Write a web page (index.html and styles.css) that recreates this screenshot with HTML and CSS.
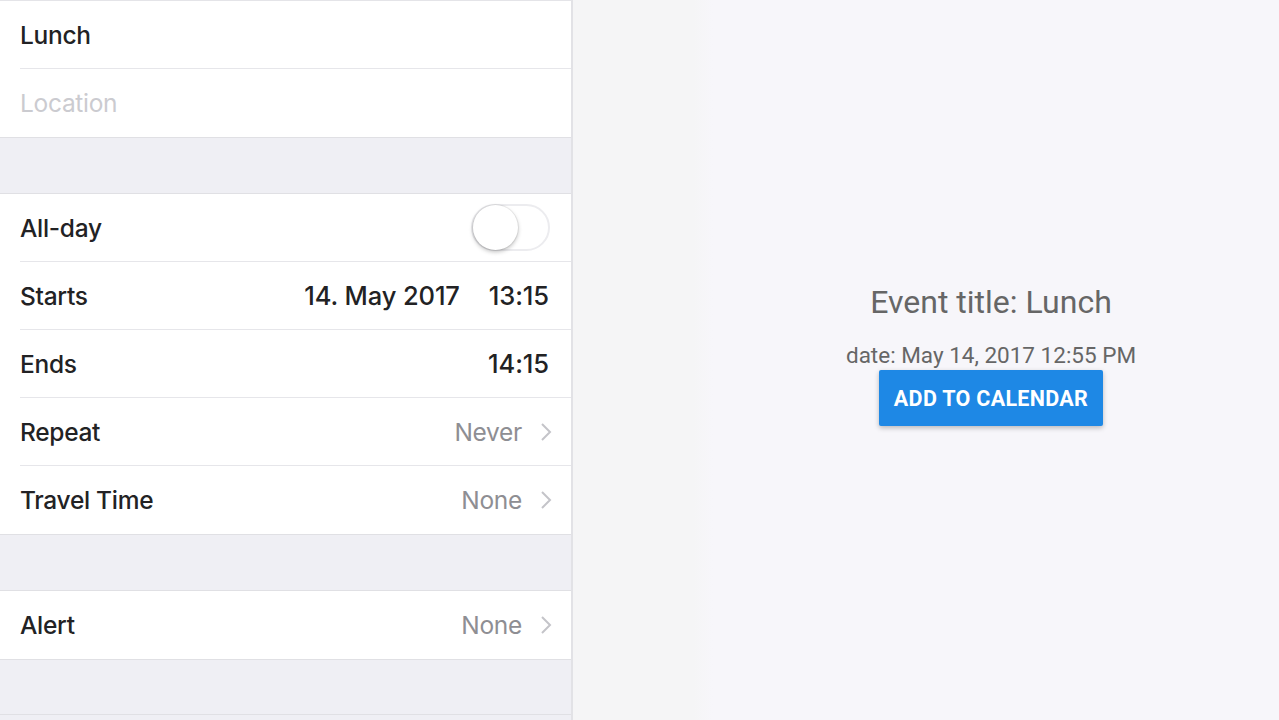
FILE: index.html
```html
<!DOCTYPE html>
<html>
<head>
<meta charset="utf-8">
<link rel="stylesheet" href="styles.css">
</head>
<body>
<div class="page">
  <div class="form">
    <div class="group first">
      <div class="row"><span class="label">Lunch</span></div>
      <div class="row"><span class="label placeholder">Location</span></div>
    </div>
    <div class="spacer"></div>
    <div class="group">
      <div class="row">
        <span class="label">All-day</span>
        <span class="toggle"><span class="knob"></span></span>
      </div>
      <div class="row">
        <span class="label">Starts</span>
        <span class="values"><span class="value">14. May 2017</span><span class="value time">13:15</span></span>
      </div>
      <div class="row">
        <span class="label">Ends</span>
        <span class="values"><span class="value time">14:15</span></span>
      </div>
      <div class="row">
        <span class="label">Repeat</span>
        <span class="values"><span class="muted">Never</span><svg class="chev" width="12" height="20" viewBox="0 0 12 20"><path d="M2 2 L10 10 L2 18" fill="none" stroke="#c4c4c9" stroke-width="2"/></svg></span>
      </div>
      <div class="row">
        <span class="label">Travel Time</span>
        <span class="values"><span class="muted">None</span><svg class="chev" width="12" height="20" viewBox="0 0 12 20"><path d="M2 2 L10 10 L2 18" fill="none" stroke="#c4c4c9" stroke-width="2"/></svg></span>
      </div>
    </div>
    <div class="spacer"></div>
    <div class="group">
      <div class="row">
        <span class="label">Alert</span>
        <span class="values"><span class="muted">None</span><svg class="chev" width="12" height="20" viewBox="0 0 12 20"><path d="M2 2 L10 10 L2 18" fill="none" stroke="#c4c4c9" stroke-width="2"/></svg></span>
      </div>
    </div>
    <div class="spacer bottom"></div>
  </div>
  <div class="side">
    <div class="event">
      <div class="title">Event title: Lunch</div>
      <div class="date">date: May 14, 2017 12:55 PM</div>
      <button class="btn">ADD TO CALENDAR</button>
    </div>
  </div>
</div>
</body>
</html>
```
FILE: styles.css
```css
* { box-sizing: border-box; }
html, body { margin: 0; padding: 0; }
body {
  width: 1279px;
  height: 720px;
  overflow: hidden;
  background: #f7f6fa;
  font-family: Inter, "Liberation Sans", sans-serif;
}
.page {
  display: flex;
  height: 720px;
}
.form {
  width: 573px;
  flex: none;
  background: #efeff4;
  border-right: 2px solid #e2e2e6;
  border-top: 1px solid #e4e4e8;
  display: flex;
  flex-direction: column;
}
.group {
  background: #fff;
  border-top: 1px solid #e0e0e4;
  border-bottom: 1px solid #e0e0e4;
}
.group.first { border-top: none; }
.row {
  height: 68px;
  margin-left: 20px;
  padding-right: 22px;
  display: flex;
  align-items: center;
  justify-content: space-between;
  border-bottom: 1px solid #e6e6ea;
}
.row:last-child { border-bottom: none; }
.label {
  font-size: 24.5px;
  font-weight: 500;
  color: #222224;
  letter-spacing: -0.3px;
}
.placeholder { color: #cbcbd0; font-weight: 400; }
.spacer { height: 55px; flex: none; }
.spacer.bottom { height: 55px; border-bottom: 1px solid #e0e0e4; }
.values {
  display: flex;
  align-items: center;
  font-size: 24.5px;
  font-weight: 500;
  letter-spacing: -0.3px;
}
.value { color: #222224; font-size: 25.5px; letter-spacing: -0.1px; }
.time { margin-left: 29px; }
.muted { color: #8e8e93; font-weight: 400; }
.chev { margin-left: 18px; margin-right: -3px; }
.toggle {
  width: 79px;
  height: 47px;
  border-radius: 24px;
  border: 2px solid #ececef;
  background: #fff;
  position: relative;
  margin-right: -1px;
}
.knob {
  position: absolute;
  left: 0;
  top: -1px;
  width: 45px;
  height: 45px;
  border-radius: 50%;
  background: #fff;
  box-shadow: 0 2px 4px rgba(0,0,0,0.25), 0 0 0 1px rgba(0,0,0,0.06);
}
.side {
  flex: 1;
  display: flex;
  justify-content: center;
  padding-left: 130px;
  padding-top: 282px;
  background: linear-gradient(to right, #f5f5f6 0, #f5f5f6 120px, #f7f6fa 140px);
}
.event {
  display: flex;
  flex-direction: column;
  align-items: center;
  font-family: Roboto, "Liberation Sans", sans-serif;
  color: #666;
}
.title {
  font-size: 32px;
  line-height: 40px;
}
.date {
  font-size: 22.5px;
  line-height: 26px;
  margin-top: 20px;
}
.btn {
  margin-top: 2px;
  width: 224px;
  height: 56px;
  border: none;
  border-radius: 2px;
  background: #1e88e5;
  color: #fff;
  font-family: Roboto, "Liberation Sans", sans-serif;
  font-weight: 700;
  font-size: 21.5px;
  letter-spacing: 0.3px;
  box-shadow: 0 2px 5px rgba(0,0,0,0.25);
}
```
